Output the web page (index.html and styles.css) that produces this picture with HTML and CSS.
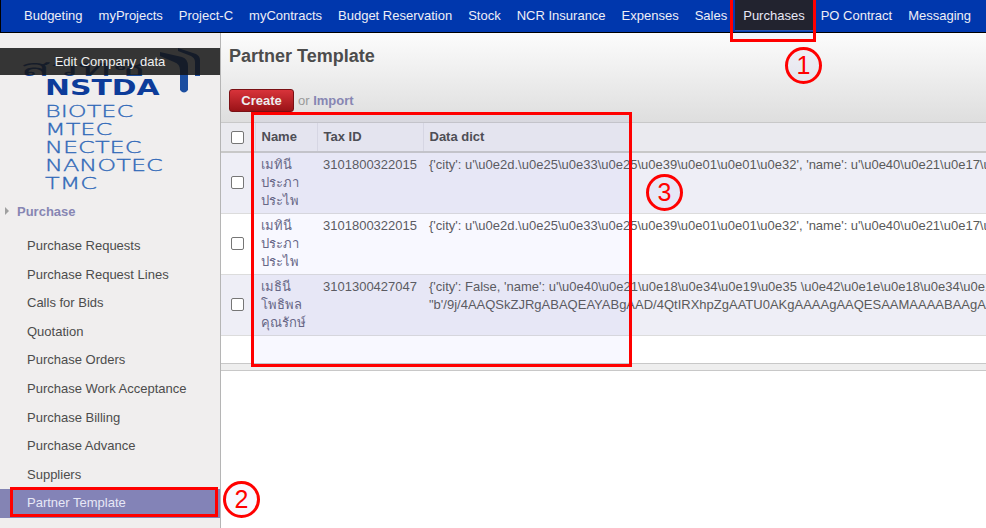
FILE: index.html
```html
<!DOCTYPE html>
<html>
<head>
    <meta charset="UTF-8">
    <meta name="viewport" content="width=device-width, initial-scale=1.0">
    <title>Partner Template</title>
    <link rel="stylesheet" href="styles.css">
</head>
<body>
    <nav class="topbar">
        <a href="#">Budgeting</a>
        <a href="#">myProjects</a>
        <a href="#">Project-C</a>
        <a href="#">myContracts</a>
        <a href="#">Budget Reservation</a>
        <a href="#">Stock</a>
        <a href="#">NCR Insurance</a>
        <a href="#">Expenses</a>
        <a href="#">Sales</a>
        <a href="#" class="active">Purchases</a>
        <a href="#">PO Contract</a>
        <a href="#">Messaging</a>
    </nav>
    <div class="page">
        <aside class="sidebar">
            <div class="logo">
                <div class="edit-company">Edit Company data</div>
                <div class="logo-thai">สวทช</div>
                <svg class="logo-swoosh" width="44" height="46" viewBox="0 0 44 46">
                    <path d="M2 4 L24 9 Q30 11 30 18 L30 42 Q26 47 22 42 L22 22 Q22 16 16 14 L2 8 Z" fill="#1c4ea0"/>
                    <path d="M20 0 L38 6 Q42 8 42 12 L42 28 L37 28 L37 14 Q37 10 33 8 L20 3 Z" fill="#1c4ea0"/>
                </svg>
                <div class="logo-main">NSTDA</div>
                <div class="logo-sub">BIOTEC</div>
                <div class="logo-sub">MTEC</div>
                <div class="logo-sub">NECTEC</div>
                <div class="logo-sub">NANOTEC</div>
                <div class="logo-sub">TMC</div>
            </div>
            <div class="menu-title"><span class="arrow"></span>Purchase</div>
            <ul class="menu">
                <li>Purchase Requests</li>
                <li>Purchase Request Lines</li>
                <li>Calls for Bids</li>
                <li>Quotation</li>
                <li>Purchase Orders</li>
                <li>Purchase Work Acceptance</li>
                <li>Purchase Billing</li>
                <li>Purchase Advance</li>
                <li>Suppliers</li>
                <li class="active">Partner Template</li>
            </ul>
        </aside>
        <main class="content">
            <div class="header">
                <h1>Partner Template</h1>
                <div class="buttons">
                    <button class="create">Create</button>
                    <span class="or">or <a href="#">Import</a></span>
                </div>
            </div>
            <table class="list">
                <colgroup>
                    <col class="col-check">
                    <col class="col-name">
                    <col class="col-tax">
                    <col>
                </colgroup>
                <thead>
                    <tr>
                        <th class="cell-check"><span class="check"></span></th>
                        <th>Name</th>
                        <th>Tax ID</th>
                        <th>Data dict</th>
                    </tr>
                </thead>
                <tbody>
                    <tr class="odd">
                        <td class="cell-check"><span class="check"></span></td>
                        <td class="cell-name">เมทินี ประภา ประไพ</td>
                        <td>3101800322015</td>
                        <td class="data">{'city': u'\u0e2d.\u0e25\u0e33\u0e25\u0e39\u0e01\u0e01\u0e32', 'name': u'\u0e40\u0e21\u0e17\u0e34\u0e19\u0e35</td>
                    </tr>
                    <tr>
                        <td class="cell-check"><span class="check"></span></td>
                        <td class="cell-name">เมทินี ประภา ประไพ</td>
                        <td>3101800322015</td>
                        <td class="data">{'city': u'\u0e2d.\u0e25\u0e33\u0e25\u0e39\u0e01\u0e01\u0e32', 'name': u'\u0e40\u0e21\u0e17\u0e34\u0e19\u0e35</td>
                    </tr>
                    <tr class="odd">
                        <td class="cell-check"><span class="check"></span></td>
                        <td class="cell-name">เมธินี โพธิพล คุณรักษ์</td>
                        <td>3101300427047</td>
                        <td class="data">{'city': False, 'name': u'\u0e40\u0e21\u0e18\u0e34\u0e19\u0e35 \u0e42\u0e1e\u0e18\u0e34\u0e1e\u0e25<br>"b'/9j/4AAQSkZJRgABAQEAYABgAAD/4QtIRXhpZgAATU0AKgAAAAgAAQESAAMAAAABAAgAAAAB</td>
                    </tr>
                </tbody>
            </table>
            <div class="list-empty"></div>
            <div class="list-foot"></div>
        </main>
    </div>

    <!-- red marks drawn over the screenshot -->
    <div class="mark box-1"></div>
    <div class="mark box-2"></div>
    <div class="mark box-3"></div>
    <div class="mark num num-1">1</div>
    <div class="mark num num-2">2</div>
    <div class="mark num num-3">3</div>
</body>
</html>
```

FILE: styles.css
```css
html, body {
    margin: 0;
    height: 528px;
    overflow: hidden;
}

body {
    font-family: "Liberation Sans", Arial, sans-serif;
    font-size: 13px;
    color: #4c4c4c;
    background: white;
    position: relative;
}

/* Top menu */
.topbar {
    display: flex;
    height: 32px;
    padding-left: 15px;
    background: #0037ad;
    border-left: 1px solid #000;
    border-bottom: 1px solid #000;
}

.topbar a {
    padding: 0 8px;
    line-height: 31px;
    color: #eeeef6;
    text-decoration: none;
}

.topbar a.active {
    background: #1e1f24;
    border-bottom: 1px solid #2050b0;
    height: 30px;
}

.page {
    display: flex;
    height: 495px;
}

/* Left column */
.sidebar {
    width: 220px;
    flex: none;
    background: #f0eeee;
    border-right: 1px solid #b5b5b5;
}

.logo {
    position: relative;
    height: 165px;
    padding: 45px 0 0 45px;
    box-sizing: border-box;
}

.edit-company {
    position: absolute;
    left: 0;
    top: 15px;
    width: 220px;
    height: 27px;
    line-height: 27px;
    text-align: center;
    color: #f0f0f0;
    background: rgba(20, 20, 20, 0.85);
    z-index: 2;
}

.logo-thai {
    position: absolute;
    left: 20px;
    top: 22px;
    font-family: "Noto Sans", "DejaVu Sans", sans-serif;
    font-size: 22px;
    line-height: 24px;
    color: #1c4ea0;
    transform: scaleX(2.3);
    transform-origin: left;
}

.logo-swoosh {
    position: absolute;
    left: 158px;
    top: 15px;
}

.logo-main {
    font-family: "DejaVu Sans", sans-serif;
    font-weight: bold;
    font-size: 21px;
    line-height: 21px;
    height: 25px;
    color: #0d3c9a;
    transform: scaleX(1.42);
    transform-origin: left;
}

.logo-sub {
    font-family: "DejaVu Sans", sans-serif;
    font-weight: 200;
    font-size: 16px;
    line-height: 18px;
    color: #2f68b8;
    -webkit-text-stroke: 0.3px #2f68b8;
    transform: scaleX(1.5);
    transform-origin: left;
}

.menu-title {
    margin-top: 6px;
    padding-left: 17px;
    position: relative;
    line-height: 16px;
    font-weight: bold;
    color: #8786b3;
}

.arrow {
    position: absolute;
    left: 5px;
    top: 3px;
    border-left: 4px solid #a0a0a0;
    border-top: 4px solid transparent;
    border-bottom: 4px solid transparent;
}

.menu {
    list-style: none;
    margin: 12px 0 0;
    padding: 0;
}

.menu li {
    height: 28.6px;
    line-height: 28.6px;
    padding-left: 27px;
}

.menu li.active {
    background: #8484b4;
    color: #eeeef6;
}

/* Right part */
.content {
    flex: 1;
    min-width: 0;
    overflow: hidden;
}

.header {
    height: 90px;
    box-sizing: border-box;
    padding: 13px 8px 0;
    background: linear-gradient(#fcfcfc, #dedede);
    border-bottom: 1px solid #c8c8c8;
}

.header h1 {
    margin: 0;
    font-size: 18px;
    line-height: 21px;
    color: #4c4c4c;
}

.buttons {
    margin-top: 22px;
    display: flex;
    align-items: center;
}

.create {
    width: 65px;
    height: 23px;
    padding: 0;
    font-family: inherit;
    font-size: 13px;
    font-weight: bold;
    color: #eeeeee;
    background: linear-gradient(#d8333a, #9a1317);
    border: 1px solid #7a1014;
    border-radius: 3px;
}

.or {
    margin-left: 4px;
    color: #999999;
}

.or a {
    font-weight: bold;
    color: #8786b3;
    text-decoration: none;
}

.list {
    width: 1400px;
    table-layout: fixed;
    border-collapse: collapse;
}

.col-check {
    width: 34px;
}

.col-name {
    width: 62px;
}

.col-tax {
    width: 106px;
}

.list th {
    height: 29px;
    box-sizing: border-box;
    padding: 0 6px 2px;
    text-align: left;
    background: #eaeaef;
    border-bottom: 2px solid #c8c8c8;
    border-right: 1px solid #dcdce2;
    color: #4c4c4c;
}

.list td {
    padding: 3px 6px;
    vertical-align: top;
    line-height: 18px;
    border-bottom: 1px solid #dcdcdc;
    color: #5a5a5a;
}

.list tr.odd td {
    background: #eeeef6;
}

.list .cell-check {
    padding: 0 0 0 10px;
    vertical-align: middle;
}

.list td.cell-check {
    padding-bottom: 2px;
}

.list td.cell-name {
    color: #66667f;
}

.list td.data {
    white-space: nowrap;
}

.check {
    display: block;
    width: 11px;
    height: 11px;
    background: white;
    border: 1px solid #767676;
    border-radius: 2px;
}

.list-empty {
    height: 27px;
    background: white;
    border-bottom: 1px solid #c8c8c8;
}

.list-foot {
    height: 6px;
    background: #eeeeee;
    border-bottom: 1px solid #c8c8c8;
}

/* Red marks */
.mark {
    position: absolute;
    box-sizing: border-box;
    border: 3px solid #f00;
    background: rgba(120, 120, 255, 0.05);
}

.box-1 {
    left: 730px;
    top: -3px;
    width: 86px;
    height: 45px;
}

.box-2 {
    left: 10px;
    top: 487px;
    width: 208px;
    height: 30px;
}

.box-3 {
    left: 251px;
    top: 112px;
    width: 381px;
    height: 255px;
}

.num {
    width: 37px;
    height: 37px;
    border-radius: 50%;
    text-align: center;
    font-size: 25px;
    line-height: 31px;
    color: #f00;
}

.num-1 {
    left: 785px;
    top: 47px;
}

.num-2 {
    left: 223px;
    top: 481px;
}

.num-3 {
    left: 646px;
    top: 174px;
}
```
